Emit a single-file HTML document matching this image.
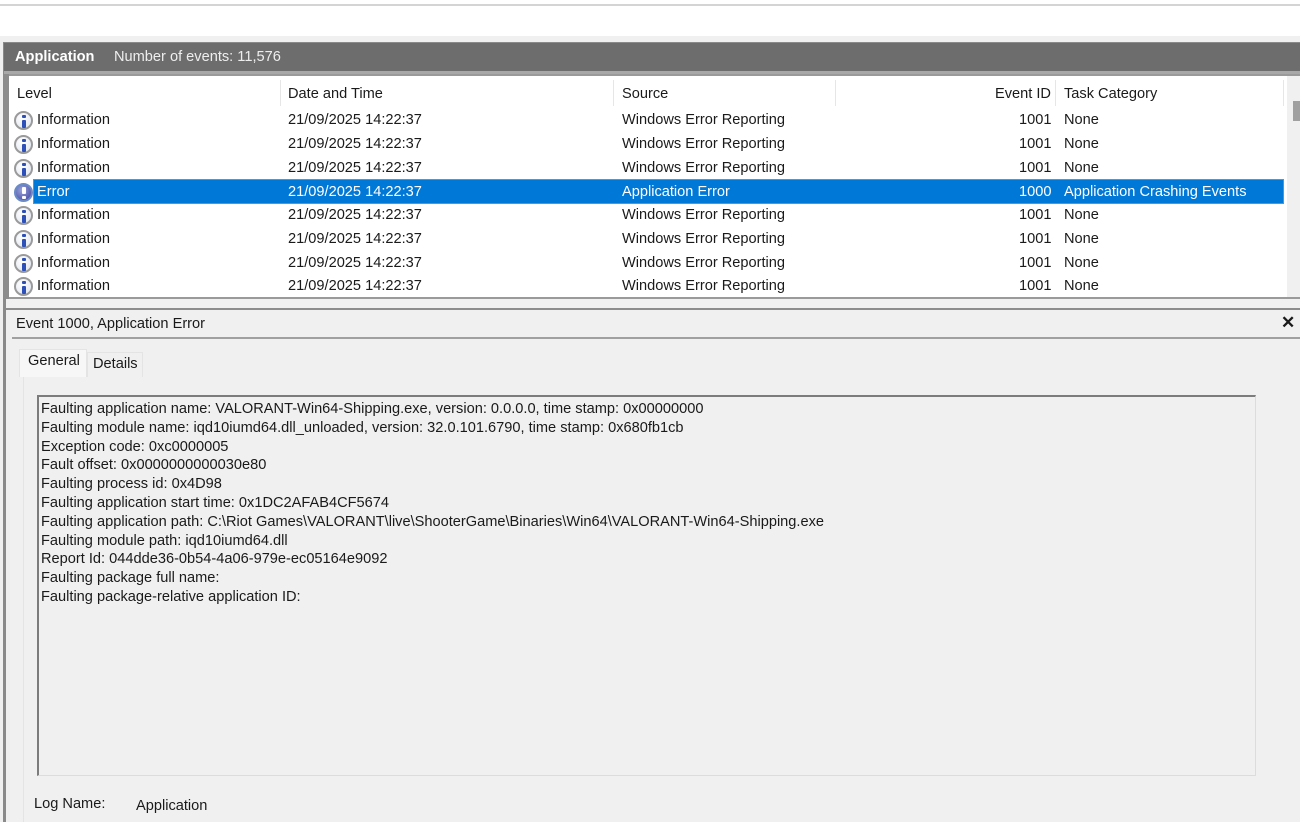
<!DOCTYPE html>
<html><head><meta charset="utf-8"><style>
*{margin:0;padding:0;box-sizing:border-box}
body{width:1300px;height:822px;overflow:hidden;background:#f0f0f0;font-family:"Liberation Sans",sans-serif;font-size:14.6px;color:#1a1a1a;position:relative}
.abs{position:absolute}
.row{position:absolute;left:10px;width:1273px;height:24px;line-height:24px;white-space:nowrap}
.row span{position:absolute}
.sel{background:#0078d7;color:#fff;outline:1px solid #6d8fb0}
.ic{position:absolute;left:4px;top:3px;width:19px;height:19px;border-radius:50%;border:2px solid #9a9a9a;background:radial-gradient(circle at 40% 35%,#fff,#dde3ee);}
.ic b{position:absolute;left:50%;top:2px;width:4px;margin-left:-2px;height:11px;}
.ic b:before{content:"";position:absolute;left:0;top:0;width:4px;height:3px;background:#2c4fb8;border-radius:1px}
.ic b:after{content:"";position:absolute;left:0;top:5px;width:4px;height:8px;background:#2c4fb8;border-radius:1px}
.err{border-color:#6a8bc8;background:radial-gradient(circle at 40% 35%,#9aa6dd,#3f3f99)}
.err b:before{top:9px;height:3px;background:#fff}
.err b:after{top:0;height:7px;background:#fff}
.txt{line-height:18.8px;font-size:14.6px;white-space:nowrap}
</style></head><body>
<div class="abs" style="left:0;top:0;width:1300px;height:36px;background:#fff"></div>
<div class="abs" style="left:0;top:4px;width:1300px;height:2px;background:#d4d4d4"></div>
<div class="abs" style="left:3px;top:42px;width:1297px;height:266px;background:#fff;border:1px solid #8a8a8a;border-right:none"></div>
<div class="abs" style="left:4px;top:43px;width:1296px;height:28px;background:#6d6d6d;color:#fff;line-height:28px">
<span class="abs" style="left:11px;font-weight:bold">Application</span>
<span class="abs" style="left:110px;color:#eee">Number of events: 11,576</span></div>
<div class="abs" style="left:4px;top:71px;width:1296px;height:3px;background:#a8a8a8"></div>
<div class="abs" style="left:4px;top:74px;width:5px;height:234px;background:#8c8c8c"></div>
<div class="abs" style="left:9px;top:74px;width:1291px;height:2px;background:#9a9a9a"></div>
<div class="row" style="top:82px"><span style="left:7px">Level</span><span style="left:278px">Date and Time</span><span style="left:612px">Source</span><span style="left:985px">Event ID</span><span style="left:1054px">Task Category</span></div>
<div class="abs" style="left:280px;top:80px;width:1px;height:26px;background:#e6e6e6"></div>
<div class="abs" style="left:613px;top:80px;width:1px;height:26px;background:#e6e6e6"></div>
<div class="abs" style="left:835px;top:80px;width:1px;height:26px;background:#e6e6e6"></div>
<div class="abs" style="left:1055px;top:80px;width:1px;height:26px;background:#e6e6e6"></div>
<div class="abs" style="left:1283px;top:80px;width:1px;height:26px;background:#e6e6e6"></div>
<div class="abs" style="left:1287px;top:76px;width:13px;height:222px;background:#f0f0f0"></div>
<div class="abs" style="left:1293px;top:101px;width:7px;height:20px;background:#a0a0a0"></div>

<div class="row" style="top:108px"><i class="ic"><b></b></i><span style="left:27px">Information</span><span style="left:278px">21/09/2025 14:22:37</span><span style="left:612px">Windows Error Reporting</span><span style="left:1009px">1001</span><span style="left:1054px">None</span></div>
<div class="row" style="top:132px"><i class="ic"><b></b></i><span style="left:27px">Information</span><span style="left:278px">21/09/2025 14:22:37</span><span style="left:612px">Windows Error Reporting</span><span style="left:1009px">1001</span><span style="left:1054px">None</span></div>
<div class="row" style="top:156px"><i class="ic"><b></b></i><span style="left:27px">Information</span><span style="left:278px">21/09/2025 14:22:37</span><span style="left:612px">Windows Error Reporting</span><span style="left:1009px">1001</span><span style="left:1054px">None</span></div>
<div class="abs sel" style="left:34px;top:180px;width:1249px;height:23px"></div>
<div class="row" style="top:180px;color:#fff"><i class="ic err"><b></b></i><span style="left:27px">Error</span><span style="left:278px">21/09/2025 14:22:37</span><span style="left:612px">Application Error</span><span style="left:1009px">1000</span><span style="left:1054px">Application Crashing Events</span></div>
<div class="row" style="top:203px"><i class="ic"><b></b></i><span style="left:27px">Information</span><span style="left:278px">21/09/2025 14:22:37</span><span style="left:612px">Windows Error Reporting</span><span style="left:1009px">1001</span><span style="left:1054px">None</span></div>
<div class="row" style="top:227px"><i class="ic"><b></b></i><span style="left:27px">Information</span><span style="left:278px">21/09/2025 14:22:37</span><span style="left:612px">Windows Error Reporting</span><span style="left:1009px">1001</span><span style="left:1054px">None</span></div>
<div class="row" style="top:251px"><i class="ic"><b></b></i><span style="left:27px">Information</span><span style="left:278px">21/09/2025 14:22:37</span><span style="left:612px">Windows Error Reporting</span><span style="left:1009px">1001</span><span style="left:1054px">None</span></div>
<div class="row" style="top:274px"><i class="ic"><b></b></i><span style="left:27px">Information</span><span style="left:278px">21/09/2025 14:22:37</span><span style="left:612px">Windows Error Reporting</span><span style="left:1009px">1001</span><span style="left:1054px">None</span></div>
<div class="abs" style="left:9px;top:297px;width:1291px;height:2px;background:#9a9a9a"></div>
<div class="abs" style="left:3px;top:299px;width:1297px;height:10px;background:#f0f0f0"></div>
<div class="abs" style="left:3px;top:299px;width:3px;height:523px;background:#8a8a8a"></div>
<div class="abs" style="left:6px;top:308px;width:1294px;height:2px;background:#8c8c8c"></div>
<div class="abs" style="left:16px;top:315px;line-height:18px">Event 1000, Application Error</div>
<div class="abs" style="left:1281px;top:313px;font-weight:bold;font-size:17px">✕</div>
<div class="abs" style="left:12px;top:337px;width:1288px;height:2px;background:#a0a0a0"></div>
<div class="abs" style="left:19px;top:349px;width:68px;height:28px;background:#f7f7f7;border:1px solid #e4e4e4;border-bottom:none"></div>
<div class="abs" style="left:28px;top:353px">General</div>
<div class="abs" style="left:87px;top:352px;width:56px;height:25px;background:#f0f0f0;border:1px solid #e4e4e4;border-bottom:none"></div>
<div class="abs" style="left:93px;top:356px">Details</div>
<div class="abs" style="left:23px;top:377px;width:1277px;height:445px;background:#f0f0f0;border-left:1px solid #e4e4e4"></div>
<div class="abs" style="left:37px;top:395px;width:1219px;height:381px;border-top:2px solid #7c7c7c;border-left:2px solid #7c7c7c;border-right:1px solid #dcdcdc;border-bottom:1px solid #dcdcdc"></div>
<div class="abs txt" style="left:41px;top:400px">Faulting application name: VALORANT-Win64-Shipping.exe, version: 0.0.0.0, time stamp: 0x00000000<br>Faulting module name: iqd10iumd64.dll_unloaded, version: 32.0.101.6790, time stamp: 0x680fb1cb<br>Exception code: 0xc0000005<br>Fault offset: 0x0000000000030e80<br>Faulting process id: 0x4D98<br>Faulting application start time: 0x1DC2AFAB4CF5674<br>Faulting application path: C:\Riot Games\VALORANT\live\ShooterGame\Binaries\Win64\VALORANT-Win64-Shipping.exe<br>Faulting module path: iqd10iumd64.dll<br>Report Id: 044dde36-0b54-4a06-979e-ec05164e9092<br>Faulting package full name: <br>Faulting package-relative application ID: </div>
<div class="abs" style="left:34px;top:796px">Log Name:</div>
<div class="abs" style="left:136px;top:798px">Application</div>
</body></html>
